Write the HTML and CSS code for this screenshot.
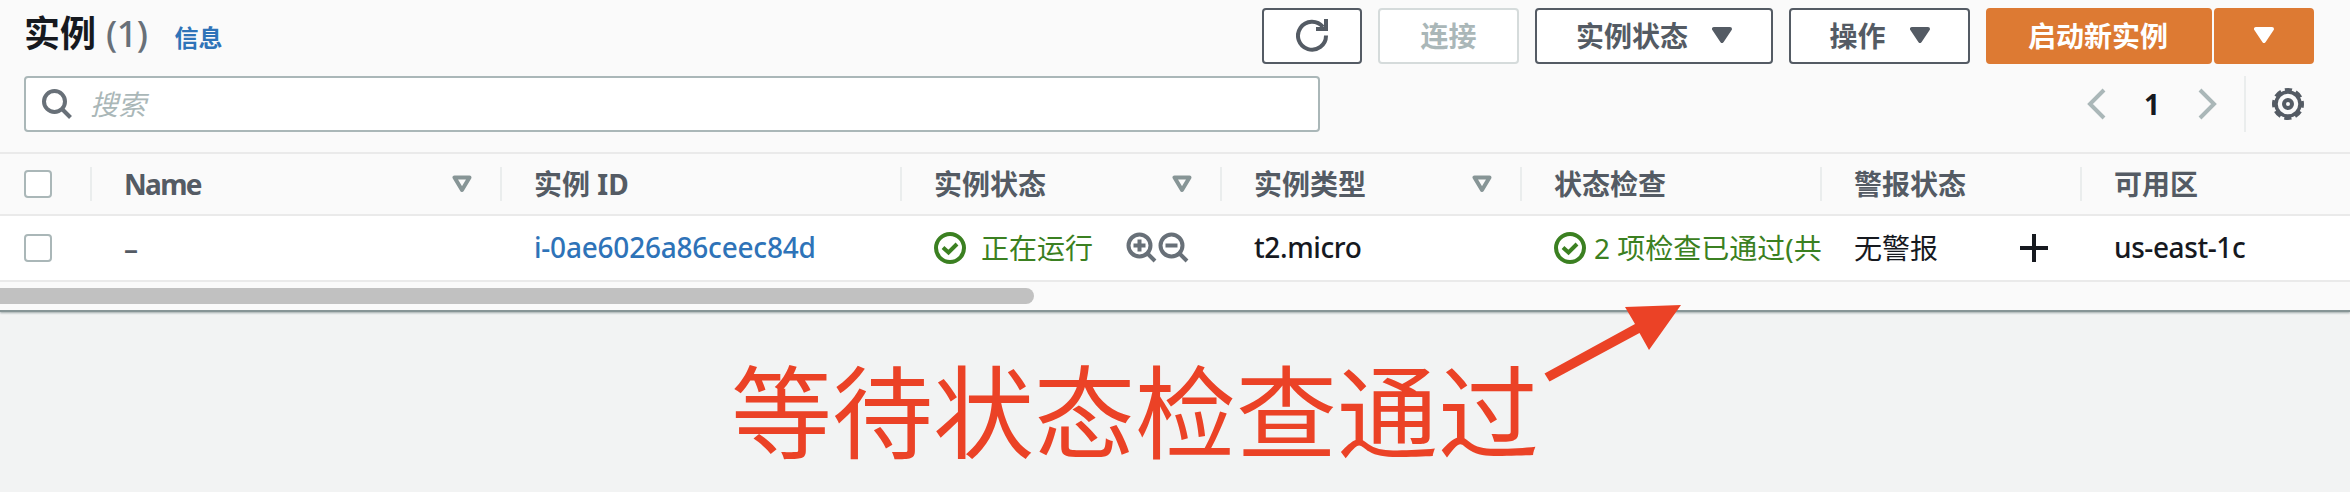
FILE: index.html
```
<!DOCTYPE html>
<html lang="zh-CN">
<head>
<meta charset="utf-8">
<title>实例</title>
<link rel="stylesheet" href="styles.css">
</head>
<body>
<svg class="defs" width="0" height="0">
  <defs>
    <symbol id="caret" viewBox="0 0 20 16"><path d="M2 2H18L10 14Z" fill="currentColor" stroke="currentColor" stroke-width="4" stroke-linejoin="round"/></symbol>
    <symbol id="sort" viewBox="0 0 20 18"><path d="M2.500 2.500H17.500L10 15Z" fill="none" stroke="currentColor" stroke-width="4" stroke-linejoin="round"/></symbol>
    <symbol id="check" viewBox="0 0 32 32"><g fill="none" stroke="currentColor" stroke-width="4"><circle cx="16" cy="16" r="14"/><path d="M9 15.500L14.500 20.500L23 12"/></g></symbol>
  </defs>
</svg>
<main class="panel">
  <header class="head">
    <div class="title"><h1>实例</h1><span class="count">(1)</span><a class="info">信息</a></div>
    <div class="actions">
      <button class="btn refresh"><svg width="32" height="36" viewBox="0 0 32 36" fill="none" stroke="currentColor" stroke-width="4"><path d="M30 18.500A14 14 0 1 1 27 10M30 2V12H20"/></svg></button>
      <button class="btn disabled">连接</button>
      <button class="btn state">实例状态<svg class="caret"><use href="#caret"/></svg></button>
      <button class="btn ops">操作<svg class="caret"><use href="#caret"/></svg></button>
      <div class="split">
        <button class="btn primary">启动新实例</button>
        <button class="btn primary more"><svg class="caret"><use href="#caret"/></svg></button>
      </div>
    </div>
  </header>
  <div class="tools">
    <div class="search"><svg width="32" height="32" viewBox="0 0 32 32" fill="none" stroke="currentColor" stroke-width="4"><circle cx="13.500" cy="13.500" r="10.500"/><path d="M21 21L29.500 29.500"/></svg><span>搜索</span></div>
    <div class="pager">
      <svg width="20" height="32" viewBox="0 0 20 32" fill="none" stroke="currentColor" stroke-width="4"><path d="M18 2L4 16L18 30"/></svg>
      <b>1</b>
      <svg width="20" height="32" viewBox="0 0 20 32" fill="none" stroke="currentColor" stroke-width="4"><path d="M2 2L16 16L2 30"/></svg>
      <div class="gear"><svg width="32" height="32" viewBox="0 0 32 32" fill="none" stroke="currentColor" stroke-width="4"><circle cx="16" cy="16" r="4"/><circle cx="16" cy="16" r="12" stroke-width="3.500"/><circle cx="16" cy="16" r="14" stroke-dasharray="7 3.995" stroke-dashoffset="3.500"/></svg></div>
    </div>
  </div>
  <div class="table">
    <div class="row thead">
      <div class="cell"><i class="box"></i></div>
      <div class="cell"><span class="name">Name</span><svg class="sort"><use href="#sort"/></svg></div>
      <div class="cell">实例 ID</div>
      <div class="cell">实例状态<svg class="sort"><use href="#sort"/></svg></div>
      <div class="cell">实例类型<svg class="sort"><use href="#sort"/></svg></div>
      <div class="cell">状态检查</div>
      <div class="cell">警报状态</div>
      <div class="cell">可用区</div>
    </div>
    <div class="row tbody">
      <div class="cell"><i class="box"></i></div>
      <div class="cell dash">–</div>
      <div class="cell link"><span class="id">i-0ae6026a86ceec84d</span></div>
      <div class="cell ok"><svg class="check"><use href="#check"/></svg><span class="running">正在运行</span>
        <span class="zooms"><svg width="32" height="32" viewBox="0 0 32 32" fill="none" stroke="currentColor" stroke-width="4"><circle cx="13.500" cy="13.500" r="11"/><path d="M21.500 21.500L29 29M7.500 13.500H19.500M13.500 7.500V19.500"/></svg><svg width="32" height="32" viewBox="0 0 32 32" fill="none" stroke="currentColor" stroke-width="4"><circle cx="13.500" cy="13.500" r="11"/><path d="M21.500 21.500L29 29M7.500 13.500H19.500"/></svg></span></div>
      <div class="cell"><span class="latin">t2.micro</span></div>
      <div class="cell ok"><svg class="check"><use href="#check"/></svg><span class="passed">2 项检查已通过(共</span></div>
      <div class="cell alarm">无警报<svg class="plus" width="28" height="28" viewBox="0 0 28 28" stroke="currentColor" stroke-width="4"><path d="M0 14H28M14 0V28"/></svg></div>
      <div class="cell"><span class="latin">us-east-1c</span></div>
    </div>
  </div>
  <div class="scroll"><div class="thumb"></div></div>
</main>
<div class="note">等待状态检查通过</div>
<svg class="arrow" width="140" height="80" viewBox="0 0 140 80"><path d="M3.500 68.500L94 19L84 2L140 0L108 45L98.500 28L8.500 76.500Z" fill="#eb4226"/></svg>
</body>
</html>
```
FILE: styles.css
```
* { box-sizing: border-box; }
body {
  margin: 0; width: 2350px; height: 492px; overflow: hidden; position: relative;
  background: #f2f3f3; color: #16191f;
  font: 28px/36px "Noto Sans", "Noto Sans CJK SC", sans-serif;
}
.defs { position: absolute; }
svg { flex: none; display: block; }
.panel { height: 312px; background: #fafafa; border-bottom: 2px solid #879596; box-shadow: 0 1px 2px #a0aaab; }
.head { height: 76px; padding: 8px 36px 12px 24px; display: flex; justify-content: space-between; }
.title { display: flex; align-items: baseline; }
h1 { margin: 0; font-size: 36px; line-height: 52px; font-weight: 700; }
.count { font-size: 36px; font-weight: 500; color: #687078; margin-left: 10px; letter-spacing: -.5px; }
.info { font-size: 24px; font-weight: 700; color: #2e73b8; margin-left: 27px; }
.actions { display: flex; gap: 16px; }
.btn {
  height: 56px; padding: 0 0 2px; border: 2px solid #545b64; border-radius: 4px; background: #fff;
  color: #545b64; font: 700 28px/36px "Noto Sans CJK SC", sans-serif; white-space: nowrap;
  display: flex; align-items: center; justify-content: center;
}
.refresh { width: 100px; }
.disabled { width: 141px; color: #aab7b8; border-color: #d5dbdb; }
.state { width: 238px; }
.ops { width: 181px; }
.caret { width: 20px; height: 16px; margin-left: 24px; }
.split { display: flex; gap: 2px; }
.primary { width: 226px; background: #dd7a33; border-color: #dd7a33; color: #fff; padding-right: 2px; }
.more { width: 100px; padding-right: 0; }
.more .caret { margin-left: 0; }
.tools { height: 76px; padding: 0 36px 0 24px; display: flex; justify-content: space-between; }
.search {
  width: 1296px; height: 56px; border: 2px solid #aab7b8; border-radius: 4px; background: #fff;
  padding-left: 15px; display: flex; align-items: center; gap: 17px; color: #687078;
}
.search span { color: #aab7b8; font-style: italic; font-family: "Noto Sans CJK SC", sans-serif; padding-bottom: 2px; }
.pager { height: 56px; display: flex; align-items: center; color: #aab7b8; }
.pager b { width: 92px; text-align: center; color: #16191f; font-family: "Open Sans", sans-serif; }
.gear { height: 56px; width: 70px; margin-left: 26px; border-left: 2px solid #eaeded; padding-left: 26px; display: flex; align-items: center; color: #545b64; }
.row { display: grid; grid-template-columns: 90px 410px 400px 320px 300px 300px 260px 270px; border-bottom: 2px solid #eaeaea; }
.thead { height: 64px; border-top: 2px solid #eaeaea; color: #545b64; font-weight: 700; align-items: center; }
.tbody { height: 66px; background: #fff; align-items: center; }
.cell { padding-left: 32px; height: 34px; display: flex; align-items: center; white-space: nowrap; border-left: 2px solid transparent; }
.cell:first-child { padding-left: 24px; border: 0; }
.thead .cell:not(:first-child) { border-left-color: #eaeded; }
.box { width: 28px; height: 28px; border: 2px solid #aab7b8; border-radius: 4px; background: #fff; }
.name { letter-spacing: -1.7px; }
.sort { width: 20px; height: 18px; margin-left: auto; margin-right: 28px; color: #879596; }
.dash { color: #545b64; font-weight: 600; }
.link { color: #2e73b8; }
.id { font-weight: 500; letter-spacing: -.22px; padding-bottom: 2px; }
.latin { font-weight: 500; letter-spacing: -.4px; padding-bottom: 2px; }
.ok { color: #3b8021; }
.check { width: 32px; height: 32px; }
.running { margin-left: 15px; }
.passed { margin-left: 8px; }
.zooms { display: flex; margin-left: 33px; color: #687078; }
.plus { margin-left: auto; margin-right: 32px; }
.scroll { padding-top: 6px; }
.thumb { width: 1034px; height: 16px; border-radius: 0 8px 8px 0; background: #c1c1c1; }
.note {
  position: absolute; left: 731px; top: 334px; white-space: nowrap; color: #eb4226;
  font: 400 101px/146px "Noto Sans CJK SC", sans-serif;
}
.arrow { position: absolute; left: 1541px; top: 305px; overflow: visible; }
```
